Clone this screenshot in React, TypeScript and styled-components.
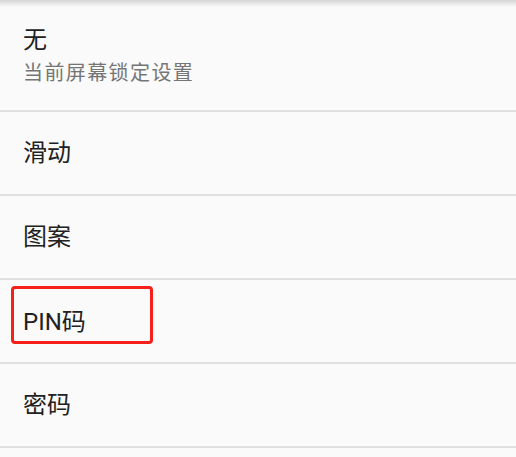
import React from "react";
import styled, { createGlobalStyle } from "styled-components";

const GlobalStyle = createGlobalStyle`
  html, body {
    margin: 0;
    padding: 0;
    background: #fafafa;
  }
  body {
    font-family: Roboto, "Noto Sans CJK SC", sans-serif;
  }
`;

type Option = {
  id: string;
  title: string;
  summary?: string;
  highlighted?: boolean;
};

const options: Option[] = [
  { id: "none", title: "无", summary: "当前屏幕锁定设置" },
  { id: "swipe", title: "滑动" },
  { id: "pattern", title: "图案" },
  { id: "pin", title: "PIN码", highlighted: true },
  { id: "password", title: "密码" },
];

export default function App() {
  return (
    <>
      <GlobalStyle />
      <Screen>
        <List>
          {options.map((opt) => (
            <Row key={opt.id} $tall={!!opt.summary}>
              <TextBlock $highlighted={!!opt.highlighted}>
                <Title>{opt.title}</Title>
                {opt.summary && <Summary>{opt.summary}</Summary>}
              </TextBlock>
            </Row>
          ))}
        </List>
      </Screen>
    </>
  );
}

const Screen = styled.div`
  width: 516px;
  height: 457px;
  overflow: hidden;
  background:
    linear-gradient(#d4d4d4, rgba(250, 250, 250, 0)) top / 100% 7px no-repeat,
    #fafafa;
`;

const List = styled.div`
  display: flex;
  flex-direction: column;
`;

const Row = styled.div<{ $tall: boolean }>`
  height: ${(p) => (p.$tall ? "110px" : "82px")};
  border-bottom: 2px solid #e0e0e0;
  display: flex;
  align-items: center;
`;

const TextBlock = styled.div<{ $highlighted: boolean }>`
  display: flex;
  flex-direction: column;
  gap: 9px;
  margin-left: ${(p) => (p.$highlighted ? "11px" : "23px")};
  ${(p) =>
    p.$highlighted &&
    `
    align-self: flex-start;
    margin-top: 6px;
    width: 142px;
    height: 58px;
    border: 3px solid #f5201a;
    border-radius: 4px;
    justify-content: center;
    padding: 13px 0 0 9px;
    box-sizing: border-box;
  `}
`;

const Title = styled.div`
  font-size: 24px;
  line-height: 26px;
  color: #212121;
`;

const Summary = styled.div`
  font-size: 20px;
  line-height: 22px;
  color: #757575;
  letter-spacing: 1.4px;
`;
